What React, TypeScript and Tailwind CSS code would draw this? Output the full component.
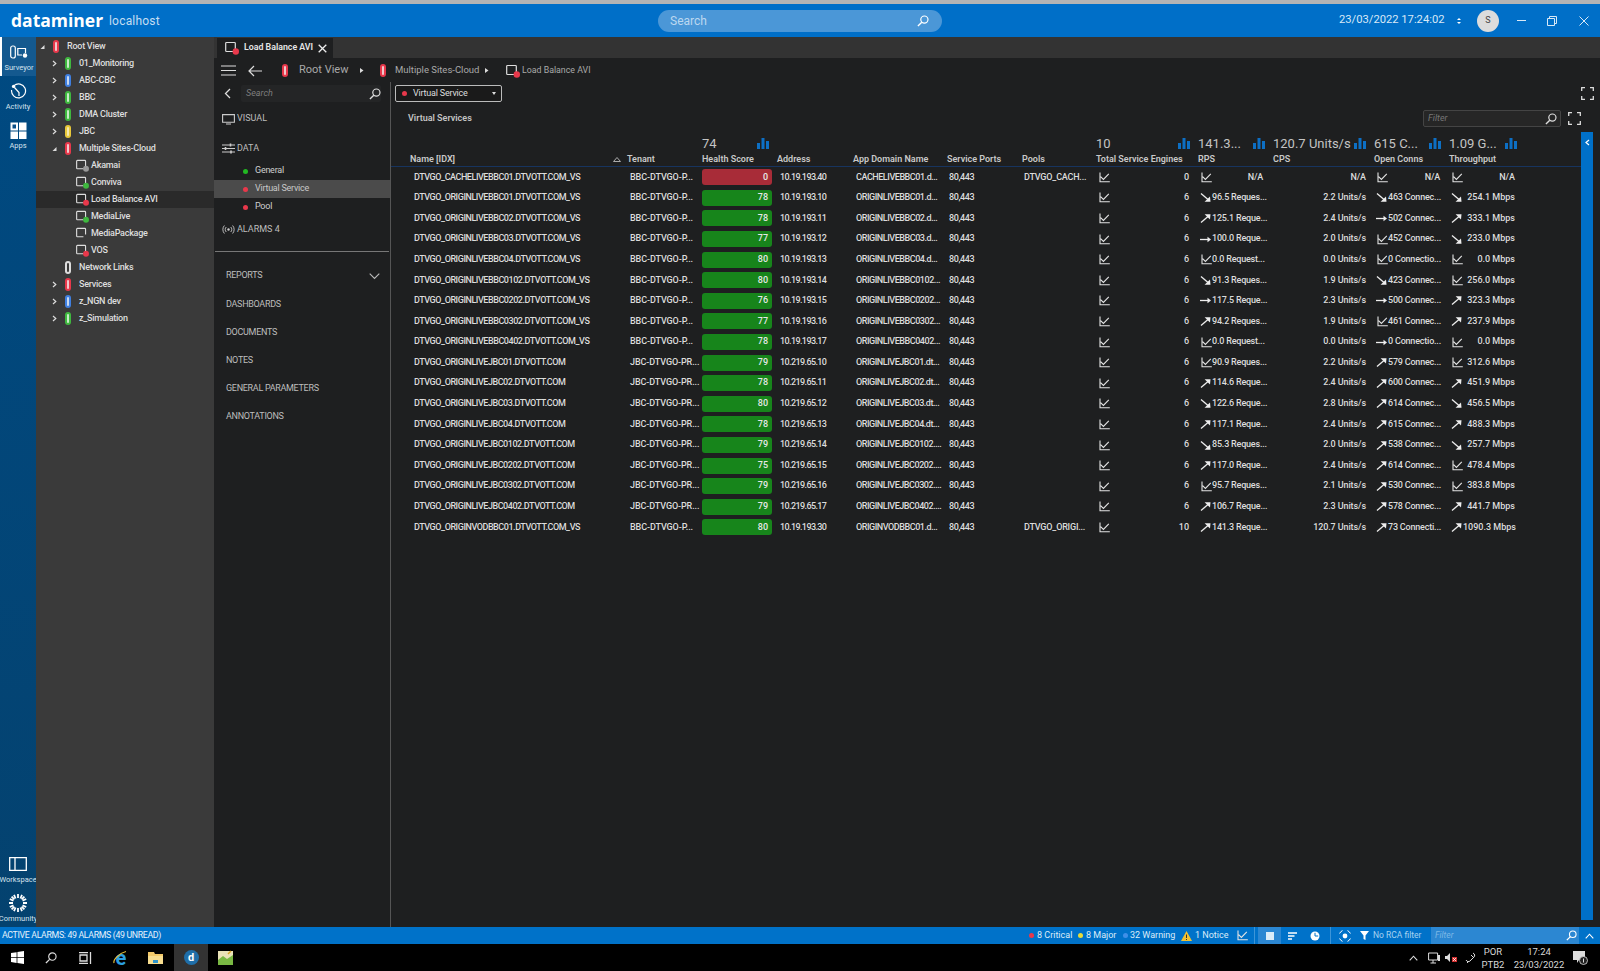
import React from "react";

type Trend = "c" | "d" | "u" | "r";

type Row = {
  name: string;
  tenant: string;
  score: number;
  address: string;
  domain: string;
  pools: string;
  engines: number;
  rps: [Trend, string];
  cps: string;
  conns: [Trend, string];
  tp: [Trend, string];
};

const BBC = "BBC-DTVGO-P...";
const JBC = "JBC-DTVGO-PR...";

const mk = (
  name: string,
  tenant: string,
  score: number,
  address: string,
  domain: string,
  rps: [Trend, string],
  cps: string,
  conns: [Trend, string],
  tp: [Trend, string],
  pools = "",
  engines = 6
): Row => ({ name, tenant, score, address, domain, pools, engines, rps, cps, conns, tp });

const rows: Row[] = [
  mk("DTVGO_CACHELIVEBBC01.DTVOTT.COM_VS", BBC, 0, "10.19.193.40", "CACHELIVEBBC01.d...", ["c", "N/A"], "N/A", ["c", "N/A"], ["c", "N/A"], "DTVGO_CACH...", 0),
  mk("DTVGO_ORIGINLIVEBBC01.DTVOTT.COM_VS", BBC, 78, "10.19.193.10", "ORIGINLIVEBBC01.d...", ["d", "96.5 Reques..."], "2.2 Units/s", ["d", "463 Connec..."], ["d", "254.1 Mbps"]),
  mk("DTVGO_ORIGINLIVEBBC02.DTVOTT.COM_VS", BBC, 78, "10.19.193.11", "ORIGINLIVEBBC02.d...", ["u", "125.1 Reque..."], "2.4 Units/s", ["r", "502 Connec..."], ["u", "333.1 Mbps"]),
  mk("DTVGO_ORIGINLIVEBBC03.DTVOTT.COM_VS", BBC, 77, "10.19.193.12", "ORIGINLIVEBBC03.d...", ["r", "100.0 Reque..."], "2.0 Units/s", ["c", "452 Connec..."], ["d", "233.0 Mbps"]),
  mk("DTVGO_ORIGINLIVEBBC04.DTVOTT.COM_VS", BBC, 80, "10.19.193.13", "ORIGINLIVEBBC04.d...", ["c", "0.0 Request..."], "0.0 Units/s", ["c", "0 Connectio..."], ["c", "0.0 Mbps"]),
  mk("DTVGO_ORIGINLIVEBBC0102.DTVOTT.COM_VS", BBC, 80, "10.19.193.14", "ORIGINLIVEBBC0102...", ["d", "91.3 Reques..."], "1.9 Units/s", ["d", "423 Connec..."], ["c", "256.0 Mbps"]),
  mk("DTVGO_ORIGINLIVEBBC0202.DTVOTT.COM_VS", BBC, 76, "10.19.193.15", "ORIGINLIVEBBC0202...", ["r", "117.5 Reque..."], "2.3 Units/s", ["r", "500 Connec..."], ["u", "323.3 Mbps"]),
  mk("DTVGO_ORIGINLIVEBBC0302.DTVOTT.COM_VS", BBC, 77, "10.19.193.16", "ORIGINLIVEBBC0302...", ["u", "94.2 Reques..."], "1.9 Units/s", ["c", "461 Connec..."], ["u", "237.9 Mbps"]),
  mk("DTVGO_ORIGINLIVEBBC0402.DTVOTT.COM_VS", BBC, 78, "10.19.193.17", "ORIGINLIVEBBC0402...", ["c", "0.0 Request..."], "0.0 Units/s", ["r", "0 Connectio..."], ["c", "0.0 Mbps"]),
  mk("DTVGO_ORIGINLIVEJBC01.DTVOTT.COM", JBC, 79, "10.219.65.10", "ORIGINLIVEJBC01.dt...", ["c", "90.9 Reques..."], "2.2 Units/s", ["u", "579 Connec..."], ["c", "312.6 Mbps"]),
  mk("DTVGO_ORIGINLIVEJBC02.DTVOTT.COM", JBC, 78, "10.219.65.11", "ORIGINLIVEJBC02.dt...", ["u", "114.6 Reque..."], "2.4 Units/s", ["u", "600 Connec..."], ["u", "451.9 Mbps"]),
  mk("DTVGO_ORIGINLIVEJBC03.DTVOTT.COM", JBC, 80, "10.219.65.12", "ORIGINLIVEJBC03.dt...", ["d", "122.6 Reque..."], "2.8 Units/s", ["u", "614 Connec..."], ["d", "456.5 Mbps"]),
  mk("DTVGO_ORIGINLIVEJBC04.DTVOTT.COM", JBC, 78, "10.219.65.13", "ORIGINLIVEJBC04.dt...", ["u", "117.1 Reque..."], "2.4 Units/s", ["u", "615 Connec..."], ["u", "488.3 Mbps"]),
  mk("DTVGO_ORIGINLIVEJBC0102.DTVOTT.COM", JBC, 79, "10.219.65.14", "ORIGINLIVEJBC0102....", ["d", "85.3 Reques..."], "2.0 Units/s", ["u", "538 Connec..."], ["d", "257.7 Mbps"]),
  mk("DTVGO_ORIGINLIVEJBC0202.DTVOTT.COM", JBC, 75, "10.219.65.15", "ORIGINLIVEJBC0202....", ["u", "117.0 Reque..."], "2.4 Units/s", ["u", "614 Connec..."], ["c", "478.4 Mbps"]),
  mk("DTVGO_ORIGINLIVEJBC0302.DTVOTT.COM", JBC, 79, "10.219.65.16", "ORIGINLIVEJBC0302....", ["c", "95.7 Reques..."], "2.1 Units/s", ["u", "530 Connec..."], ["c", "383.8 Mbps"]),
  mk("DTVGO_ORIGINLIVEJBC0402.DTVOTT.COM", JBC, 79, "10.219.65.17", "ORIGINLIVEJBC0402....", ["u", "106.7 Reque..."], "2.3 Units/s", ["u", "578 Connec..."], ["u", "441.7 Mbps"]),
  mk("DTVGO_ORIGINVODBBC01.DTVOTT.COM_VS", BBC, 80, "10.19.193.30", "ORIGINVODBBC01.d...", ["u", "141.3 Reque..."], "120.7 Units/s", ["u", "73 Connecti..."], ["u", "1090.3 Mbps"], "DTVGO_ORIGI...", 10),
];

const GRID = "grid grid-cols-[217px_75px_75px_76px_94px_75px_74px_102px_75px_101px_75px_76px]";

function Pill({ fill, inner }: { fill: string; inner: string }) {
  return (
    <span className={`flex h-[13px] w-[6px] shrink-0 items-center justify-center rounded-[3px] ${fill}`}>
      <span className={`h-[9px] w-[2px] rounded-[1px] ${inner}`} />
    </span>
  );
}

function ServiceIcon({ dot, size = 14 }: { dot?: string; size?: number }) {
  return (
    <svg width={size} height={size} viewBox="0 0 14 14" className="shrink-0">
      <path d="M8 10.5H1.5a.8.8 0 0 1-.8-.8V2.3a.8.8 0 0 1 .8-.8h8a.8.8 0 0 1 .8.8V8" fill="none" stroke="#ddd" strokeWidth="1.2" />
      {dot && <circle cx="10.8" cy="10.5" r="3.2" fill={dot} />}
    </svg>
  );
}

function ChartIcon({ className = "" }: { className?: string }) {
  return (
    <svg width="11" height="11" viewBox="0 0 11 11" className={`shrink-0 ${className}`}>
      <path d="M1 .5V9.8H10.8M1.6 4.6L4.4 7.4L9.8 1.8" fill="none" stroke="#e4e4e4" strokeWidth="1.1" />
    </svg>
  );
}

function TrendIcon({ t }: { t: Trend }) {
  if (t === "c") return <ChartIcon className="ml-[1px]" />;
  return (
    <svg width="12" height="11" viewBox="0 0 12 11" className="shrink-0">
      {t === "d" && (
        <>
          <path d="M1 1.5L8 7.5" stroke="#eee" strokeWidth="1.3" />
          <path d="M10.5 9.8H4.6L10 4.4Z" fill="#eee" />
        </>
      )}
      {t === "u" && (
        <>
          <path d="M1 9.5L8 3.5" stroke="#eee" strokeWidth="1.3" />
          <path d="M10.5 1.2H4.6L10 6.6Z" fill="#eee" />
        </>
      )}
      {t === "r" && (
        <>
          <path d="M0 5.5H8" stroke="#eee" strokeWidth="1.3" />
          <path d="M7.5 2.8L11 5.5L7.5 8.2Z" fill="#eee" />
        </>
      )}
    </svg>
  );
}

function BarsIcon() {
  return (
    <svg width="12" height="11" viewBox="0 0 12 11" className="shrink-0">
      <path d="M0 5h3v6H0zM4.5 0h3v11h-3zM9 3h3v8H9z" fill="#0d6fc4" />
    </svg>
  );
}

function Lens({ color = "#ddd", size = 13 }: { color?: string; size?: number }) {
  return (
    <svg width={size} height={size} viewBox="0 0 13 13" className="shrink-0">
      <circle cx="8" cy="5" r="3.9" fill="none" stroke={color} strokeWidth="1.3" />
      <path d="M5.2 7.8L1 12" stroke={color} strokeWidth="1.5" />
    </svg>
  );
}

function Expand() {
  return (
    <svg width="13" height="13" viewBox="0 0 13 13" className="shrink-0">
      <path d="M.7 4V.7H4M9 .7h3.3V4M.7 9v3.3H4M9 12.3h3.3V9" fill="none" stroke="#ddd" strokeWidth="1.3" />
    </svg>
  );
}

function Chevron({ open }: { open?: boolean }) {
  return (
    <svg width="5" height="7" viewBox="0 0 5 7" className="shrink-0">
      {open ? <path d="M4.5 2V6H.5Z" fill="#ddd" /> : <path d="M1 1L3.8 3.5L1 6" fill="none" stroke="#ddd" strokeWidth="1.2" />}
    </svg>
  );
}

function RailItem({ label, active, children }: { label: string; active?: boolean; children: React.ReactNode }) {
  return (
    <div className={`flex h-[39px] flex-col items-center justify-end pb-[3px] ${active ? "border-l-2 border-white bg-[#14598f]" : ""}`}>
      <div className="flex h-[22px] items-center">{children}</div>
      <span className="text-[7.5px] leading-[10px] text-[#d5e2ee]">{label}</span>
    </div>
  );
}

function TreeRow({ indent, chevron, active, children }: { indent: string; chevron?: "open" | "closed"; active?: boolean; children: React.ReactNode }) {
  return (
    <div className={`flex h-[17px] items-center whitespace-nowrap text-[9px] font-medium tracking-[-0.25px] text-[#dedede] ${indent} ${active ? "bg-[#2a2a2a]" : ""}`}>
      <span className="flex w-[13px] shrink-0 items-center">{chevron && <Chevron open={chevron === "open"} />}</span>
      {children}
    </div>
  );
}

function TreeLeaf({ label, dot }: { label: string; dot?: string }) {
  return (
    <>
      <span className="mr-[1px] flex w-[14px] shrink-0">
        <ServiceIcon dot={dot} size={13} />
      </span>
      <span>{label}</span>
    </>
  );
}

function TreeNode({ label, fill, inner }: { label: string; fill: string; inner: string }) {
  return (
    <>
      <Pill fill={fill} inner={inner} />
      <span className="ml-[8px]">{label}</span>
    </>
  );
}

function Tree() {
  return (
    <div className="w-[178px] shrink-0 bg-[#3a3a3a] pt-px">
      <TreeRow indent="pl-[4px]" chevron="open">
        <TreeNode label="Root View" fill="bg-[#e8384b]" inner="bg-[#f0c8cc]" />
      </TreeRow>
      <TreeRow indent="pl-[16px]" chevron="closed">
        <TreeNode label="01_Monitoring" fill="bg-[#3fb83f]" inner="bg-[#c8eac8]" />
      </TreeRow>
      <TreeRow indent="pl-[16px]" chevron="closed">
        <TreeNode label="ABC-CBC" fill="bg-[#3f7fe0]" inner="bg-[#c8d8f0]" />
      </TreeRow>
      <TreeRow indent="pl-[16px]" chevron="closed">
        <TreeNode label="BBC" fill="bg-[#3fb83f]" inner="bg-[#c8eac8]" />
      </TreeRow>
      <TreeRow indent="pl-[16px]" chevron="closed">
        <TreeNode label="DMA Cluster" fill="bg-[#3fb83f]" inner="bg-[#c8eac8]" />
      </TreeRow>
      <TreeRow indent="pl-[16px]" chevron="closed">
        <TreeNode label="JBC" fill="bg-[#e8c83a]" inner="bg-[#f4e8b0]" />
      </TreeRow>
      <TreeRow indent="pl-[16px]" chevron="open">
        <TreeNode label="Multiple Sites-Cloud" fill="bg-[#e8384b]" inner="bg-[#f0c8cc]" />
      </TreeRow>
      <TreeRow indent="pl-[27px]">
        <TreeLeaf label="Akamai" dot="#9a9a9a" />
      </TreeRow>
      <TreeRow indent="pl-[27px]">
        <TreeLeaf label="Conviva" dot="#3fb83f" />
      </TreeRow>
      <TreeRow indent="pl-[27px]" active>
        <TreeLeaf label="Load Balance AVI" dot="#e8384b" />
      </TreeRow>
      <TreeRow indent="pl-[27px]">
        <TreeLeaf label="MediaLive" dot="#3fb83f" />
      </TreeRow>
      <TreeRow indent="pl-[27px]">
        <TreeLeaf label="MediaPackage" />
      </TreeRow>
      <TreeRow indent="pl-[27px]">
        <TreeLeaf label="VOS" dot="#e8384b" />
      </TreeRow>
      <TreeRow indent="pl-[16px]">
        <TreeNode label="Network Links" fill="bg-[#ddd]" inner="bg-[#3a3a3a]" />
      </TreeRow>
      <TreeRow indent="pl-[16px]" chevron="closed">
        <TreeNode label="Services" fill="bg-[#e8384b]" inner="bg-[#f0c8cc]" />
      </TreeRow>
      <TreeRow indent="pl-[16px]" chevron="closed">
        <TreeNode label="z_NGN dev" fill="bg-[#3f7fe0]" inner="bg-[#c8d8f0]" />
      </TreeRow>
      <TreeRow indent="pl-[16px]" chevron="closed">
        <TreeNode label="z_Simulation" fill="bg-[#3fb83f]" inner="bg-[#c8eac8]" />
      </TreeRow>
    </div>
  );
}

function Caret() {
  return (
    <svg width="5" height="7" viewBox="0 0 5 7" className="shrink-0">
      <path d="M1 1L4.5 3.5L1 6Z" fill="#ddd" />
    </svg>
  );
}

function Header() {
  return (
    <div className="flex h-[33px] shrink-0 items-center whitespace-nowrap bg-[#006fc8] pl-[11px] text-white">
      <span className="w-[98px] font-['Open_Sans',sans-serif] text-[17.5px] font-bold leading-none">dataminer</span>
      <span className="w-[44px] text-[12px] tracking-[0.2px] text-[#c5def2]">localhost</span>
      <div className="ml-[505px] flex h-[22px] w-[284px] items-center justify-between rounded-full bg-[#4b97d7] pl-[12px] pr-[13px]">
        <span className="text-[12px] text-[#bcd8f0]">Search</span>
        <Lens color="#fff" size={12} />
      </div>
      <span className="ml-[397px] w-[105px] text-[11.2px] text-[#d9e9f7]">23/03/2022 17:24:02</span>
      <span className="ml-[11px] flex w-[8px] flex-col items-center gap-[2px]">
        <span className="h-0 w-0 border-x-[2.5px] border-b-[2.5px] border-x-transparent border-b-white" />
        <span className="h-0 w-0 border-x-[2.5px] border-t-[2.5px] border-x-transparent border-t-white" />
      </span>
      <span className="ml-[14px] flex h-[22px] w-[22px] items-center justify-center rounded-full bg-[#dcdcdc] text-[9px] text-[#444]">S</span>
      <span className="ml-[18px] h-px w-[9px] bg-[#d9e9f7]" />
      <svg width="10" height="10" viewBox="0 0 10 10" className="ml-[21px] shrink-0">
        <path d="M.5 2.5h7v7h-7zM2.5 2.5v-2h7v7h-2" fill="none" stroke="#d9e9f7" />
      </svg>
      <svg width="10" height="10" viewBox="0 0 10 10" className="ml-[22px] shrink-0">
        <path d="M.5.5l9 9M9.5.5l-9 9" stroke="#d9e9f7" />
      </svg>
    </div>
  );
}

function Rail() {
  return (
    <div className="flex w-[36px] shrink-0 flex-col bg-gradient-to-b from-[#004a82] to-[#04426f]">
      <RailItem label="Surveyor" active>
        <svg width="18" height="14" viewBox="0 0 18 14">
          <rect x=".7" y="1" width="4.6" height="12" rx="2" fill="none" stroke="#fff" strokeWidth="1.2" />
          <path d="M12 10H7.8V3.5H15.5V8" fill="none" stroke="#fff" strokeWidth="1.2" />
          <circle cx="15" cy="10.5" r="2.2" fill="#fff" />
        </svg>
      </RailItem>
      <RailItem label="Activity">
        <svg width="17" height="17" viewBox="0 0 17 17">
          <path d="M4 2.6A7 7 0 1 1 1.6 7" fill="none" stroke="#fff" strokeWidth="1.2" />
          <path d="M4.5 4.5L9 9.5V13" fill="none" stroke="#fff" strokeWidth="1.2" />
          <circle cx="3.6" cy="3.4" r="1.7" fill="#fff" />
        </svg>
      </RailItem>
      <RailItem label="Apps">
        <svg width="17" height="17" viewBox="0 0 17 17">
          <path d="M.5.5H8v8H.5zM9 .5h7.5v8H9zM.5 9.5H8V17H.5zM9 9.5h7.5V17H9z" fill="#fff" />
          <path d="M2.5 2.5h3.5v4H2.5z" fill="#0a4f88" />
        </svg>
      </RailItem>
      <div className="mt-auto flex flex-col">
        <RailItem label="Workspace">
          <svg width="18" height="14" viewBox="0 0 18 14">
            <path d="M.7.7h16.6v12.6H.7zM6 .7v12.6" fill="none" stroke="#fff" strokeWidth="1.3" />
          </svg>
        </RailItem>
        <RailItem label="Community">
          <svg width="20" height="20" viewBox="0 0 20 20">
            <g stroke="#fff" strokeWidth="1.8">
              <path d="M10 1v4M10 15v4M1 10h4M15 10h4M3.6 3.6l2.8 2.8M13.6 13.6l2.8 2.8M16.4 3.6l-2.8 2.8M6.4 13.6l-2.8 2.8" />
              <path d="M6 1.8l1.6 3.7M14 18.2l-1.6-3.7M18.2 6l-3.7 1.6M1.8 14l3.7-1.6M14 1.8l-1.6 3.7M6 18.2l1.6-3.7M1.8 6l3.7 1.6M18.2 14l-3.7-1.6" />
            </g>
          </svg>
        </RailItem>
      </div>
    </div>
  );
}

function Breadcrumb() {
  return (
    <div className="flex h-[24px] shrink-0 items-center whitespace-nowrap bg-[#1e1f20] pl-[7px] pt-px text-[#a9a9a9]">
      <svg width="15" height="11" viewBox="0 0 15 11" className="shrink-0">
        <path d="M0 1h15M0 5.5h15M0 10h15" stroke="#ddd" strokeWidth="1.2" />
      </svg>
      <svg width="14" height="12" viewBox="0 0 14 12" className="ml-[12px] shrink-0">
        <path d="M14 6H1M6 1L1 6l5 5" fill="none" stroke="#ddd" strokeWidth="1.2" />
      </svg>
      <span className="ml-[20px]">
        <Pill fill="bg-[#e8384b]" inner="bg-[#f0c8cc]" />
      </span>
      <span className="ml-[11px] w-[50px] text-[11px]">Root View</span>
      <span className="ml-[10px]">
        <Caret />
      </span>
      <span className="ml-[16px]">
        <Pill fill="bg-[#e8384b]" inner="bg-[#f0c8cc]" />
      </span>
      <span className="ml-[9px] w-[80px] text-[9.5px]">Multiple Sites-Cloud</span>
      <span className="ml-[9px]">
        <Caret />
      </span>
      <span className="ml-[17px]">
        <ServiceIcon dot="#e8384b" />
      </span>
      <span className="ml-[2px] text-[8.8px]">Load Balance AVI</span>
    </div>
  );
}

function SubItem({ label, dot, active }: { label: string; dot: string; active?: boolean }) {
  return (
    <div className={`flex h-[18px] items-center pl-[29px] text-[9px] tracking-[-0.25px] ${active ? "bg-[#4b4b4b] text-[#c8c8c8]" : "text-[#cfcfcf]"}`}>
      <span className={`h-[5px] w-[5px] rounded-full ${dot}`} />
      <span className="ml-[7px]">{label}</span>
    </div>
  );
}

function Nav() {
  return (
    <div className="flex w-[177px] shrink-0 flex-col whitespace-nowrap border-r border-[#555]">
      <div className="flex h-[22px] items-center pl-[10px] pr-[9px] pt-[1px]">
        <svg width="7" height="11" viewBox="0 0 7 11" className="shrink-0">
          <path d="M6 1L1.5 5.5L6 10" fill="none" stroke="#ddd" strokeWidth="1.3" />
        </svg>
        <div className="ml-[10px] flex h-[17px] flex-1 items-center justify-between rounded-[2px] bg-[#242526] pl-[5px]">
          <span className="text-[9px] italic text-[#7e7e7e]">Search</span>
          <Lens size={12} />
        </div>
      </div>
      <div className="mt-[8px] flex h-[14px] items-center pl-[8px] text-[9px] text-[#bdbdbd]">
        <svg width="13" height="11" viewBox="0 0 13 11" className="mr-[2px] shrink-0">
          <path d="M.6.6h11.8v7.6H.6zM4 10h5" fill="none" stroke="#ccc" strokeWidth="1.1" />
        </svg>
        VISUAL
      </div>
      <div className="mt-[15px] flex h-[15px] items-center pl-[8px] text-[9px] text-[#bdbdbd]">
        <svg width="13" height="11" viewBox="0 0 13 11" className="mr-[2px] shrink-0">
          <path d="M0 2h13M0 5.5h13M0 9h13" stroke="#ccc" strokeWidth="1" />
          <path d="M8.5.5v3M3.5 4v3M9 7.5v3" stroke="#ccc" strokeWidth="1.6" />
        </svg>
        DATA
      </div>
      <div className="mt-[6px] flex flex-col">
        <SubItem label="General" dot="bg-[#22b822]" />
        <SubItem label="Virtual Service" dot="bg-[#e8384b]" active />
        <SubItem label="Pool" dot="bg-[#e8384b]" />
      </div>
      <div className="mt-[6px] flex h-[15px] items-center pl-[8px] text-[9px] text-[#bdbdbd]">
        <svg width="13" height="9" viewBox="0 0 13 9" className="mr-[2px] shrink-0">
          <circle cx="6.5" cy="4.5" r="1.2" fill="#ccc" />
          <path d="M4.3 2a3.4 3.4 0 0 0 0 5M8.7 2a3.4 3.4 0 0 1 0 5M2.4.5a6 6 0 0 0 0 8M10.6.5a6 6 0 0 1 0 8" fill="none" stroke="#ccc" strokeWidth=".9" />
        </svg>
        ALARMS 4
      </div>
      <div className="mx-[1px] mt-[14px] h-px bg-[#777]" />
      <div className="flex flex-col pt-[10px] text-[9px] tracking-[-0.3px] text-[#bdbdbd]">
        <div className="flex h-[28.2px] items-center justify-between pl-[12px] pr-[10px]">
          <span>REPORTS</span>
          <svg width="11" height="7" viewBox="0 0 11 7" className="shrink-0">
            <path d="M.7.7L5.5 5.5L10.3.7" fill="none" stroke="#bbb" strokeWidth="1.1" />
          </svg>
        </div>
        <div className="flex h-[28.2px] items-center pl-[12px]">DASHBOARDS</div>
        <div className="flex h-[28.2px] items-center pl-[12px]">DOCUMENTS</div>
        <div className="flex h-[28.2px] items-center pl-[12px]">NOTES</div>
        <div className="flex h-[28.2px] items-center pl-[12px]">GENERAL PARAMETERS</div>
        <div className="flex h-[28.2px] items-center pl-[12px]">ANNOTATIONS</div>
      </div>
    </div>
  );
}

function StatCell({ value }: { value?: string }) {
  if (!value) return <div />;
  return (
    <div className="flex items-center justify-between pr-[8px]">
      <span className="text-[13px] leading-none text-[#c4c4c4]">{value}</span>
      <BarsIcon />
    </div>
  );
}

function TrendCell({ v, right }: { v: [Trend, string]; right: string }) {
  return (
    <div className={`flex items-center justify-between pl-[2px] ${right}`}>
      <TrendIcon t={v[0]} />
      <span>{v[1]}</span>
    </div>
  );
}

function Table() {
  const heads = ["Name [IDX]", "Tenant", "Health Score", "Address", "App Domain Name", "Service Ports", "Pools", "Total Service Engines", "RPS", "CPS", "Open Conns", "Throughput"];
  return (
    <div className="flex-1 whitespace-nowrap pt-[6px]">
      <div className={`${GRID} h-[20px] items-center pl-[19px]`}>
        <div />
        <div />
        <StatCell value="74" />
        <div />
        <div />
        <div />
        <div />
        <StatCell value="10" />
        <StatCell value="141.3..." />
        <StatCell value="120.7 Units/s" />
        <StatCell value="615 C..." />
        <StatCell value="1.09 G..." />
      </div>
      <div className="border-b border-[#17345f]">
        <div className={`${GRID} h-[13px] items-center pl-[19px] text-[9px] font-semibold text-[#c9c9c9]`}>
          {heads.map((h, i) =>
            i === 0 ? (
              <div key={h} className="relative">
                {h}
                <svg width="8" height="5" viewBox="0 0 8 5" className="absolute right-[6px] top-[4px]">
                  <path d="M4 .5L7.5 4.5H.5Z" fill="none" stroke="#aaa" />
                </svg>
              </div>
            ) : (
              <div key={h}>{h}</div>
            )
          )}
        </div>
      </div>
      <div className="pl-[19px] text-[9px] font-medium text-[#dcdcdc]">
        {rows.map((r) => (
          <div key={r.name} className={`${GRID} h-[20.6px] items-center`}>
            <div className="pl-[4px] tracking-[-0.45px]">{r.name}</div>
            <div className="pl-[3px] tracking-[-0.1px]">{r.tenant}</div>
            <div className={`flex h-4 w-[70px] items-center justify-end rounded-[3px] pr-[4px] text-[#e8e8e8] ${r.score === 0 ? "bg-[#a82c38]" : "bg-[#17851b]"}`}>{r.score}</div>
            <div className="pl-[3px] tracking-[-0.6px]">{r.address}</div>
            <div className="pl-[3px] tracking-[-0.45px]">{r.domain}</div>
            <div className="pl-[2px] tracking-[-0.4px]">80,443</div>
            <div className="pl-[2px] tracking-[-0.2px]">{r.pools}</div>
            <div className="flex items-center justify-between pl-[3px] pr-[9px]">
              <ChartIcon />
              <span>{r.engines}</span>
            </div>
            <TrendCell v={r.rps} right="pr-[10px] tracking-[-0.2px]" />
            <div className="pr-[8px] text-right tracking-[-0.1px]">{r.cps}</div>
            <TrendCell v={r.conns} right="pr-[9px] tracking-[-0.2px]" />
            <TrendCell v={r.tp} right="pr-[10px]" />
          </div>
        ))}
      </div>
    </div>
  );
}

function Content() {
  return (
    <div className="flex min-w-0 flex-1 flex-col pt-[3px]">
      <div className="flex h-[17px] shrink-0 items-center justify-between pl-[4px] pr-[6px]">
        <div className="flex h-[17px] w-[107px] items-center rounded-[2px] border border-[#bbb] bg-[#1a1a1a] pl-[6px] pr-[5px] text-[9px] tracking-[-0.2px] text-[#ddd]">
          <span className="h-[5px] w-[5px] rounded-full bg-[#e8384b]" />
          <span className="ml-[6px] flex-1">Virtual Service</span>
          <span className="h-0 w-0 border-x-[2.5px] border-t-[3px] border-x-transparent border-t-[#ddd]" />
        </div>
        <Expand />
      </div>
      <div className="mt-[8px] flex h-[17px] shrink-0 items-center pl-[17px] pr-[19px]">
        <span className="text-[9px] font-semibold text-[#c4c4c4]">Virtual Services</span>
        <div className="ml-auto flex h-[17px] w-[138px] items-center justify-between rounded-[2px] border border-[#444] bg-[#262626] pl-[4px] pr-[3px]">
          <span className="text-[9px] italic text-[#777]">Filter</span>
          <Lens size={12} />
        </div>
        <span className="ml-[7px]">
          <Expand />
        </span>
      </div>
      <div className="flex min-h-0 flex-1">
        <Table />
        <div className="mb-[7px] mr-[7px] mt-[5px] w-[12px] bg-[#0070c8] pl-[4px] pt-[7px]">
          <svg width="5" height="7" viewBox="0 0 5 7">
            <path d="M4 1L1 3.5L4 6" fill="none" stroke="#fff" strokeWidth="1.2" />
          </svg>
        </div>
      </div>
    </div>
  );
}

function StatusBar() {
  return (
    <div className="flex h-[17px] shrink-0 items-center whitespace-nowrap bg-[#0072c9] pl-[2px] text-[9px] text-[#dcecf8]">
      <span className="text-[8.8px] tracking-[-0.35px] text-[#e6f1fa]">ACTIVE ALARMS: 49 ALARMS (49 UNREAD)</span>
      <div className="ml-auto flex h-full items-center">
        <span className="h-[5px] w-[5px] rounded-full bg-[#e8384b]" />
        <span className="ml-[3px] w-[33px]">8 Critical</span>
        <span className="ml-[8px] h-[5px] w-[5px] rounded-full bg-[#e6dc3a]" />
        <span className="ml-[3px] w-[29px]">8 Major</span>
        <span className="ml-[8px] h-[5px] w-[5px] rounded-full bg-[#3f8fe8]" />
        <span className="ml-[2px] w-[43px]">32 Warning</span>
        <svg width="11" height="10" viewBox="0 0 11 10" className="ml-[8px] shrink-0">
          <path d="M5.5 0L11 10H0Z" fill="#f2c230" />
          <path d="M5.5 3.5v3.5M5.5 8v1" stroke="#333" />
        </svg>
        <span className="ml-[3px] w-[31px]">1 Notice</span>
        <span className="ml-[11px]">
          <ChartIcon />
        </span>
        <span className="ml-[6px] h-full w-px bg-[#3d95d8]" />
        <div className="ml-[3px] flex h-full w-[23px] items-center justify-center bg-[#2c87d2]">
          <span className="h-[8px] w-[8px] bg-[#dcecf8]" />
        </div>
        <svg width="9" height="8" viewBox="0 0 9 8" className="ml-[7px] shrink-0">
          <path d="M0 1h9M0 4h6.5M0 7h4" stroke="#fff" strokeWidth="1.4" />
        </svg>
        <svg width="10" height="10" viewBox="0 0 10 10" className="ml-[13px] shrink-0">
          <circle cx="5" cy="5" r="4.5" fill="#fff" />
          <path d="M5 1.8V5H8.2" fill="none" stroke="#0072c9" />
        </svg>
        <span className="ml-[10px] h-full w-px bg-[#3d95d8]" />
        <svg width="12" height="12" viewBox="0 0 12 12" className="ml-[8px] shrink-0">
          <circle cx="6" cy="6" r="2.4" fill="#fff" />
          <path d="M.6 3.5A5.8 5.8 0 0 1 3.5.6M8.5.6a5.8 5.8 0 0 1 2.9 2.9M11.4 8.5a5.8 5.8 0 0 1-2.9 2.9M3.5 11.4A5.8 5.8 0 0 1 .6 8.5" fill="none" stroke="#fff" />
        </svg>
        <svg width="9" height="9" viewBox="0 0 9 9" className="ml-[9px] shrink-0">
          <path d="M0 0h9L5.5 4.5V9l-2-1V4.5Z" fill="#fff" />
        </svg>
        <span className="ml-[4px] w-[46px] text-[8.5px] text-[#a9d2f0]">No RCA filter</span>
        <div className="ml-[12px] flex h-full w-[148px] items-center justify-between bg-[#2c87d2] pl-[4px] pr-[2px]">
          <span className="text-[8.5px] italic text-[#7db8e6]">Filter</span>
          <Lens color="#fff" size={11} />
        </div>
        <svg width="9" height="6" viewBox="0 0 9 6" className="mx-[6px] shrink-0">
          <path d="M.7 5.3L4.5 1.2L8.3 5.3" fill="none" stroke="#fff" strokeWidth="1.1" />
        </svg>
      </div>
    </div>
  );
}

function TaskBar() {
  return (
    <div className="flex h-[27px] shrink-0 items-center bg-black text-[#d8d8d8]">
      <svg width="13" height="13" viewBox="0 0 13 13" className="ml-[11px] shrink-0">
        <path d="M0 2l5.6-.8v5H0zM6.4 1L13 0v6.2H6.4zM0 6.9h5.6v5L0 11.1zM6.4 6.9H13V13l-6.6-1z" fill="#fff" />
      </svg>
      <span className="ml-[21px]">
        <svg width="12" height="12" viewBox="0 0 13 13">
          <circle cx="8" cy="5" r="4" fill="none" stroke="#ddd" strokeWidth="1.2" />
          <path d="M5 8L1 12" stroke="#ddd" strokeWidth="1.4" />
        </svg>
      </span>
      <svg width="13" height="12" viewBox="0 0 13 12" className="ml-[22px] shrink-0">
        <path d="M0 .7h9M0 11.3h9M1 3h7v6H1zM11.5 0v12" fill="none" stroke="#ddd" strokeWidth="1.3" />
      </svg>
      <span className="relative ml-[21px] flex h-[16px] w-[16px] items-center justify-center">
        <span className="text-[20px] font-bold leading-none text-[#2b9fe0]">e</span>
        <svg width="18" height="16" viewBox="0 0 18 16" className="absolute left-[-1px] top-0">
          <path d="M2 13C1 10 7 3 14 1.5" fill="none" stroke="#e8c23a" strokeWidth="1.2" />
        </svg>
      </span>
      <svg width="15" height="13" viewBox="0 0 15 13" className="ml-[19px] shrink-0">
        <path d="M0 1h6l1 2h8v10H0z" fill="#f2c96a" />
        <path d="M0 5h15v8H0z" fill="#f7dd8f" />
        <path d="M5 9h5v3H5z" fill="#2f93c9" />
      </svg>
      <div className="ml-[11px] flex h-full w-[34px] items-center justify-center bg-[#333]">
        <span className="flex h-[15px] w-[15px] items-center justify-center rounded-full bg-[#1f6ea8] text-[11px] font-bold leading-none text-white">d</span>
      </div>
      <svg width="15" height="15" viewBox="0 0 15 15" className="ml-[10px] shrink-0">
        <path d="M0 1h15v14H0z" fill="#e9e2b8" />
        <path d="M0 10l5-4 4 3 6-4v10H0z" fill="#79b843" />
        <path d="M10 4l3-3" stroke="#d9a520" strokeWidth="1.5" />
      </svg>
      <div className="ml-auto flex items-center pr-[12px]">
        <svg width="9" height="6" viewBox="0 0 9 6" className="shrink-0">
          <path d="M.7 5.3L4.5 1.2L8.3 5.3" fill="none" stroke="#ddd" strokeWidth="1.1" />
        </svg>
        <svg width="12" height="12" viewBox="0 0 12 12" className="ml-[10px] shrink-0">
          <path d="M.6 1h9v7h-9zM5 8v3M2.5 11H8" fill="none" stroke="#ddd" />
          <path d="M10 3h2v6h-2z" fill="#ddd" />
        </svg>
        <svg width="12" height="11" viewBox="0 0 12 11" className="ml-[5px] shrink-0">
          <path d="M0 4h2l3-3v9L2 7H0z" fill="#ddd" />
          <path d="M7 5h5v5H7z" fill="#d32f2f" />
          <path d="M8 6l3 3M11 6l-3 3" stroke="#fff" strokeWidth=".8" />
        </svg>
        <svg width="12" height="12" viewBox="0 0 12 12" className="ml-[7px] shrink-0">
          <path d="M9 1c2 1 2 3 1 4L6 9c-1 1-3 1-4-1M3 11l2-2M7 3l2 2" fill="none" stroke="#ddd" />
        </svg>
        <div className="ml-[5px] flex w-[24px] flex-col items-center text-[9.5px] leading-[13px]">
          <span>POR</span>
          <span>PTB2</span>
        </div>
        <div className="ml-[10px] flex w-[48px] flex-col items-center text-[9.5px] leading-[13px]">
          <span>17:24</span>
          <span>23/03/2022</span>
        </div>
        <svg width="15" height="15" viewBox="0 0 15 15" className="ml-[10px] shrink-0">
          <path d="M0 1h12v9H6l-2 3v-3H0z" fill="#ddd" />
          <circle cx="10.5" cy="10.5" r="4" fill="#222" stroke="#ddd" strokeWidth=".8" />
          <path d="M10.5 8.5v4" stroke="#ddd" />
        </svg>
      </div>
    </div>
  );
}

export default function App() {
  return (
    <div className="flex h-[971px] w-[1600px] flex-col overflow-hidden bg-[#1e1f20] font-['Roboto',sans-serif]">
      <div className="h-1 shrink-0 bg-[#b4b4b4]" />
      <Header />
      <div className="flex min-h-0 flex-1">
        <Rail />
        <Tree />
        <div className="flex min-w-0 flex-1 flex-col">
          <div className="flex h-[21px] shrink-0 bg-[#333] pl-[3px] pt-px">
            <div className="flex w-[116px] items-center whitespace-nowrap bg-[#1e1f20] pl-[8px] text-[8.8px] font-semibold text-[#e6e6e6]">
              <ServiceIcon dot="#e8384b" />
              <span className="ml-[5px]">Load Balance AVI</span>
              <svg width="9" height="9" viewBox="0 0 9 9" className="ml-auto mr-[6px] shrink-0">
                <path d="M.7.7l7.6 7.6M8.3.7L.7 8.3" stroke="#eee" strokeWidth="1.3" />
              </svg>
            </div>
          </div>
          <Breadcrumb />
          <div className="flex min-h-0 flex-1">
            <Nav />
            <Content />
          </div>
        </div>
      </div>
      <StatusBar />
      <TaskBar />
    </div>
  );
}
